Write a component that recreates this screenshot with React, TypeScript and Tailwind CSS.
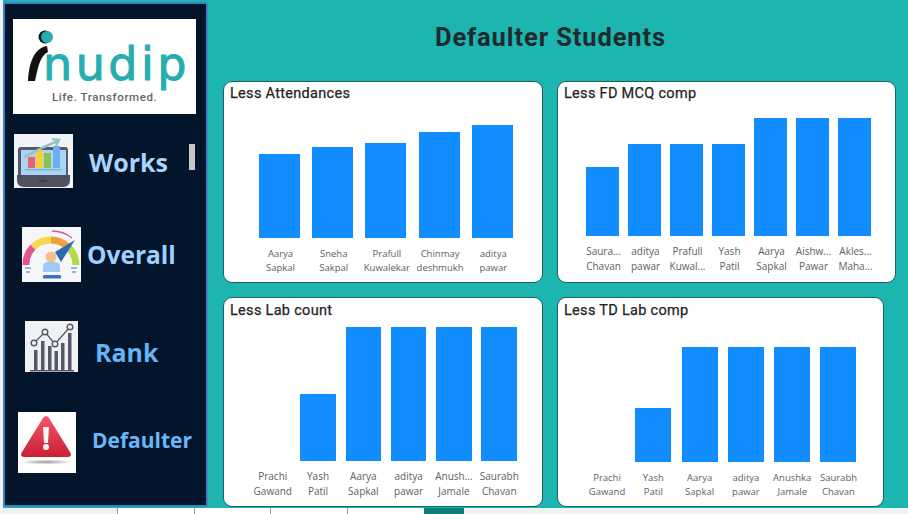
type Item = { first: string; second: string; height: number };

const attendance: Item[] = [
  { first: "Aarya", second: "Sapkal", height: 84 },
  { first: "Sneha", second: "Sakpal", height: 91 },
  { first: "Prafull", second: "Kuwalekar", height: 95 },
  { first: "Chinmay", second: "deshmukh", height: 106 },
  { first: "aditya", second: "pawar", height: 113 },
];

const mcp: Item[] = [
  { first: "Saura...", second: "Chavan", height: 69 },
  { first: "aditya", second: "pawar", height: 92 },
  { first: "Prafull", second: "Kuwal...", height: 92 },
  { first: "Yash", second: "Patil", height: 92 },
  { first: "Aarya", second: "Sapkal", height: 118 },
  { first: "Aishw...", second: "Pawar", height: 118 },
  { first: "Akles...", second: "Maha...", height: 118 },
];

const labCount: Item[] = [
  { first: "Prachi", second: "Gawand", height: 0 },
  { first: "Yash", second: "Patil", height: 67 },
  { first: "Aarya", second: "Sapkal", height: 134 },
  { first: "aditya", second: "pawar", height: 134 },
  { first: "Anush...", second: "Jamale", height: 134 },
  { first: "Saurabh", second: "Chavan", height: 134 },
];

const labComp: Item[] = [
  { first: "Prachi", second: "Gawand", height: 0 },
  { first: "Yash", second: "Patil", height: 54 },
  { first: "Aarya", second: "Sapkal", height: 115 },
  { first: "aditya", second: "pawar", height: 115 },
  { first: "Anushka", second: "Jamale", height: 115 },
  { first: "Saurabh", second: "Chavan", height: 115 },
];

function ChartCard(props: {
  title: string;
  items: Item[];
  cardClass: string;
  titleClass: string;
  rowClass: string;
  colClass: string;
  labelClass: string;
}) {
  return (
    <div className={"flex flex-col justify-between rounded-[9px] border border-[#1d5f63] bg-white " + props.cardClass}>
      <div className={"pl-[6px] font-['Roboto',sans-serif] text-[14.5px] leading-[20px] font-normal tracking-[0.3px] text-[#252423] [-webkit-text-stroke:0.25px_#252423] " + props.titleClass}>
        {props.title}
      </div>
      <div className={"flex items-end " + props.rowClass}>
        {props.items.map((item) => (
          <div key={item.first + item.second} className={"flex flex-col items-center " + props.colClass}>
            <div className="w-full bg-[#118dff]" style={{ height: item.height }} />
            <div className={"text-center font-['Open_Sans',sans-serif] text-[#605e5c] whitespace-nowrap " + props.labelClass}>
              <div>{item.first}</div>
              <div>{item.second}</div>
            </div>
          </div>
        ))}
      </div>
    </div>
  );
}

function LogoFigure() {
  return (
    <svg viewBox="0 0 34 54" className="h-[54px] w-[34px] shrink-0">
      <path d="M1 52 C2 34 7 19 20 17 L21 23 C13 27 11 38 8 52 Z" fill="#111" />
      <circle cx="18" cy="8" r="6.5" fill="#111" />
      <circle cx="20" cy="8" r="6" fill="#25aeb0" />
    </svg>
  );
}

function LaptopIcon() {
  return (
    <svg viewBox="0 0 59 54" className="h-[54px] w-[59px] shrink-0 bg-[#f3f4f6]">
      <rect x="4" y="13" width="50" height="32" rx="3" fill="#55586a" />
      <rect x="7" y="16" width="45" height="27" fill="#a9d5f6" />
      <rect x="14" y="23" width="7" height="11" fill="#ee5f6d" />
      <rect x="22" y="16" width="6.5" height="18" fill="#fbd02f" />
      <rect x="30" y="19" width="7" height="15" fill="#8cc152" />
      <rect x="39" y="12" width="7" height="22" fill="#6caeee" />
      <rect x="11" y="35" width="37" height="1.5" fill="#7fb8c9" />
      <path d="M3 41 H56 V46 Q56 53 49 53 H10 Q3 53 3 46 Z" fill="#4f515e" />
      <rect x="25" y="46" width="8" height="1.5" fill="#3a3c47" />
      <path d="M10 23 L30 13 L44 7 M38 5 L45 6 L42 12" fill="none" stroke="#9dbfc7" strokeWidth="2.5" />
    </svg>
  );
}

function GaugeIcon() {
  return (
    <svg viewBox="0 0 59 55" className="h-[55px] w-[59px] shrink-0 bg-[#f5f6f8]">
      <path d="M4 38 A25 25 0 0 1 11 20" fill="none" stroke="#e4558d" strokeWidth="7" />
      <path d="M11 20 A25 25 0 0 1 29 13" fill="none" stroke="#f5d84f" strokeWidth="7" />
      <path d="M29 13 A25 25 0 0 1 46 20" fill="none" stroke="#eda03e" strokeWidth="7" />
      <path d="M46 20 A25 25 0 0 1 54 38" fill="none" stroke="#b5d94a" strokeWidth="7" />
      <path d="M30 4 A32 32 0 0 1 50 11" fill="none" stroke="#e4558d" strokeWidth="1.5" />
      <path d="M33 25 L53 13 L39 35 Z" fill="#2f67b5" />
      <circle cx="29" cy="30" r="5.5" fill="#f2c08e" />
      <path d="M21 45 V40 Q21 35 26 35 H33 Q38 35 38 40 V45 Z" fill="#a0c9f5" />
      <rect x="21" y="48" width="18" height="3.5" rx="1" fill="#3d72c0" />
      <path d="M3 41 H9 M4 45 H8 M49 41 H55 M50 45 H54" stroke="#3d72c0" strokeWidth="1.2" />
    </svg>
  );
}

function RankIcon() {
  return (
    <svg viewBox="0 0 53 51" className="h-[51px] w-[53px] shrink-0 bg-[#f0f1f3]">
      <path d="M9 49 V29 H12.5 V49 Z M16 49 V20 H19.5 V49 Z M23 49 V25 H26.5 V49 Z M29.5 49 V30 H33 V49 Z M36 49 V22 H39.5 V49 Z M43 49 V12 H46.5 V49 Z" fill="#555869" />
      <rect x="5" y="49" width="44" height="1.5" fill="#555869" />
      <path d="M9 22 L20 11 L30 23 L45 6" fill="none" stroke="#555869" strokeWidth="1.3" />
      <circle cx="9" cy="22" r="2.8" fill="#f0f1f3" stroke="#555869" strokeWidth="1.4" />
      <circle cx="20" cy="11" r="2.8" fill="#f0f1f3" stroke="#555869" strokeWidth="1.4" />
      <circle cx="30" cy="23" r="2.8" fill="#f0f1f3" stroke="#555869" strokeWidth="1.4" />
      <circle cx="45" cy="6" r="2.8" fill="#f0f1f3" stroke="#555869" strokeWidth="1.4" />
    </svg>
  );
}

function AlertIcon() {
  return (
    <svg viewBox="0 0 58 61" className="h-[61px] w-[58px] shrink-0 bg-white">
      <defs>
        <linearGradient id="alertRed" x1="0" y1="0" x2="0" y2="1">
          <stop offset="0" stopColor="#f4566a" />
          <stop offset="1" stopColor="#c91f33" />
        </linearGradient>
        <radialGradient id="alertShadow">
          <stop offset="0" stopColor="#9a9a9a" />
          <stop offset="1" stopColor="#ffffff" />
        </radialGradient>
      </defs>
      <path d="M25 6 Q28 2 31 6 L52 40 Q55 45 49 45 H7 Q1 45 4 40 Z" fill="url(#alertRed)" />
      <path d="M25 15 H31 L30 31 H26 Z" fill="#fdf3f3" />
      <circle cx="28" cy="35" r="3" fill="#fdf3f3" />
      <ellipse cx="28" cy="50" rx="26" ry="2.5" fill="url(#alertShadow)" />
    </svg>
  );
}

function NavLabel(props: { text: string; className: string }) {
  return <span className={"font-['Open_Sans',sans-serif] font-bold whitespace-nowrap " + props.className}>{props.text}</span>;
}

export default function App() {
  return (
    <div className="flex h-[514px] w-[908px] flex-col overflow-hidden bg-[#eef3f2]">
      <div className="flex h-[508px] shrink-0">
        <div className="w-[3px] shrink-0" />
        <div className="flex flex-1 bg-[#1cb5b0]">
          <aside className="mt-[2px] h-[505px] w-[205px] shrink-0 rounded-[2px] border-2 border-[#3b82c4] bg-[#03152a]">
            <div className="ml-[8px] mt-[15px] flex h-[95px] w-[183px] flex-col bg-white pl-[14px] pt-[10px]">
              <div className="flex h-[59px] items-start">
                <LogoFigure />
                <span className="ml-[-18px] mt-[5px] font-['DejaVu_Sans',sans-serif] text-[46px] leading-[60px] tracking-[3.5px] text-[#25aeb0] [-webkit-text-stroke:1px_#25aeb0]">
                  nudip
                </span>
              </div>
              <div className="ml-[25px] mt-[2px] font-['Roboto',sans-serif] text-[11.5px] leading-[14px] font-medium tracking-[0.6px] text-[#666]">
                Life. Transformed.
              </div>
            </div>
            <div className="ml-[9px] mt-[20px] flex items-center">
              <LaptopIcon />
              <NavLabel text="Works" className="ml-[16px] mt-[2px] text-[25px] leading-[34px] text-[#a6d5ff]" />
              <div className="ml-[21px] mt-[10px] h-[26px] w-[6px] self-start bg-[#c8c8c8]" />
            </div>
            <div className="ml-[17px] mt-[39px] flex items-center">
              <GaugeIcon />
              <NavLabel text="Overall" className="ml-[6px] text-[24.5px] leading-[34px] text-[#9fd0ff]" />
            </div>
            <div className="ml-[20px] mt-[39px] flex items-center">
              <RankIcon />
              <NavLabel text="Rank" className="ml-[17px] mt-[10px] text-[25px] leading-[34px] text-[#66b3f5]" />
            </div>
            <div className="ml-[13px] mt-[40px] flex items-center">
              <AlertIcon />
              <NavLabel text="Defaulter" className="ml-[16px] mt-[-6px] text-[21px] leading-[30px] text-[#6cb5f8]" />
            </div>
          </aside>
          <main className="min-w-0 flex-1 pl-[15px]">
            <h1 className="h-[81px] pr-[30px] pt-[19px] text-center font-['Roboto',sans-serif] text-[25.5px] leading-[36px] font-bold tracking-[0.9px] text-[#1f2a2e]">
              Defaulter Students
            </h1>
            <div className="flex gap-[14px]">
              <ChartCard
                title="Less Attendances"
                items={attendance}
                cardClass="h-[202px] w-[320px]"
                titleClass="pt-[2px]"
                rowClass="gap-[12.2px] pb-[7px] pl-[35px]"
                colClass="w-[41px]"
                labelClass="ml-[2px] mt-[9px] text-[9.5px] leading-[14px]"
              />
              <ChartCard
                title="Less FD MCQ comp"
                items={mcp}
                cardClass="h-[202px] w-[339px]"
                titleClass="pt-[2px]"
                rowClass="gap-[9px] pb-[8px] pl-[28px]"
                colClass="w-[33px]"
                labelClass="ml-[2px] mt-[8px] text-[10px] leading-[15px]"
              />
            </div>
            <div className="mt-[14px] flex gap-[14px]">
              <ChartCard
                title="Less Lab count"
                items={labCount}
                cardClass="h-[210px] w-[320px]"
                titleClass="pt-[3px]"
                rowClass="gap-[9.8px] pb-[7px] pl-[31px]"
                colClass="w-[35.5px]"
                labelClass="mt-[8px] text-[10px] leading-[15px]"
              />
              <ChartCard
                title="Less TD Lab comp"
                items={labComp}
                cardClass="h-[210px] w-[327px]"
                titleClass="pt-[3px]"
                rowClass="gap-[10.3px] pb-[7px] pl-[31px]"
                colClass="w-[36px]"
                labelClass="mt-[9px] text-[9.5px] leading-[14px]"
              />
            </div>
          </main>
        </div>
      </div>
      <div className="flex h-[6px]">
        <div className="w-[117px]" />
        <div className="h-full w-[77px] border-l border-[#9a9a9a] bg-white" />
        <div className="h-full w-[76px] border-l border-[#9a9a9a] bg-white" />
        <div className="h-full w-[77px] border-l border-[#9a9a9a] bg-white" />
        <div className="h-full w-[77px] border-l border-[#9a9a9a] bg-white" />
        <div className="h-full w-[40px] bg-[#0b7f73]" />
      </div>
    </div>
  );
}
